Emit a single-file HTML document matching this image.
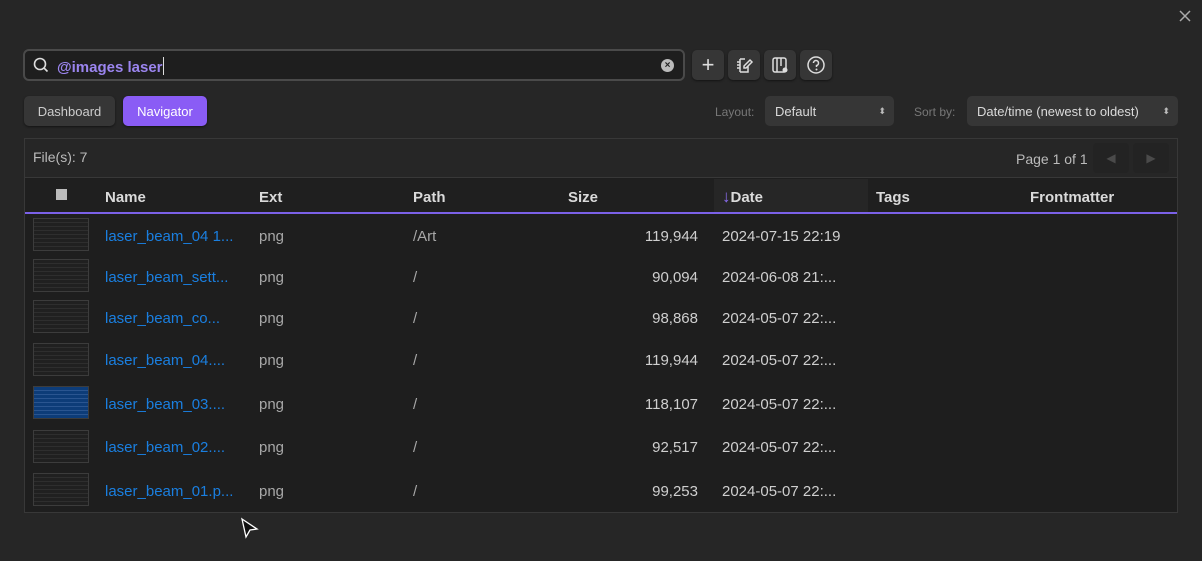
<!DOCTYPE html>
<html><head><style>
*{box-sizing:border-box;margin:0;padding:0}
body{width:1202px;height:561px;background:#262626;font-family:"Liberation Sans",sans-serif;color:#dadada;position:relative;overflow:hidden;font-size:14px}
.abs{position:absolute}
.btn{position:absolute;background:#363636;border-radius:5px;box-shadow:0 1px 2px rgba(0,0,0,.5)}
.sel{position:absolute;background:#363636;border-radius:5px;color:#dadada;font-size:13px;line-height:30px;padding-left:10px}
.lbl{position:absolute;color:#777;font-size:12px}
table{border-collapse:collapse;position:absolute;left:25px;top:179px;width:1152px;table-layout:fixed}
th{height:34px;background:#1f1f1f;text-align:left;font-weight:bold;font-size:15px;color:#dadada;padding-left:8px;padding-top:3px;border-bottom:2px solid #7b61e8}
td{font-size:15px;color:#a8a8a8;padding-left:8px;padding-top:3px;white-space:nowrap;overflow:hidden}
td.n{color:#1a7fe0}
td.r{text-align:right;padding-right:16px;color:#cfcfcf}
td.d{color:#cfcfcf}
.th{width:56px;height:33px;margin-top:-3px;background:#202020;border:1px solid #3c3c3c;background-image:repeating-linear-gradient(#202020 0 3px,#2e2e2e 3px 4px)}
</style></head><body>
<svg class="abs" style="left:1179px;top:10px" width="12" height="12"><path d="M1 1l10 10M11 1L1 11" stroke="#aaa" stroke-width="1.5"/></svg>
<div class="abs" style="left:23px;top:49px;width:662px;height:32px;background:#1e1e1e;border:2px solid #4a4a4a;border-radius:6px"></div>
<svg class="abs" style="left:33px;top:57px" width="16" height="16" viewBox="0 0 16 16"><circle cx="7" cy="7" r="5.5" fill="none" stroke="#ddd" stroke-width="1.6"/><path d="M11 11l3.5 3.5" stroke="#ddd" stroke-width="1.6"/></svg>
<div class="abs" style="left:57px;top:57px;color:#9b85ef;font-weight:bold;font-size:15px">@images laser<span style="display:inline-block;width:1px;height:18px;background:#ddd;vertical-align:-3px"></span></div>
<div class="abs" style="left:661px;top:59px;width:13px;height:13px;border-radius:50%;background:#bbb;color:#222;font-size:10px;line-height:13px;text-align:center;font-weight:bold">×</div>
<div class="btn" style="left:692px;top:50px;width:32px;height:30px;color:#ddd;font-size:22px;text-align:center;line-height:29px">+</div>
<div class="btn" style="left:728px;top:50px;width:32px;height:30px"><svg width="32" height="30"><path d="M12 9h5M12 22h8v-6M12 9v13M9 12h3M9 15h3M9 18h3M16 16l6-6 2 2-6 6h-2z" stroke="#ddd" stroke-width="1.5" fill="none"/></svg></div>
<div class="btn" style="left:764px;top:50px;width:32px;height:30px"><svg width="32" height="30"><rect x="9" y="8" width="13" height="14" rx="2" stroke="#ddd" stroke-width="1.5" fill="none"/><path d="M13 8v14M17 8v8" stroke="#ddd" stroke-width="1.5"/><circle cx="21" cy="20" r="2.5" fill="#ddd"/></svg></div>
<div class="btn" style="left:800px;top:50px;width:32px;height:30px"><svg width="32" height="30"><circle cx="16" cy="15" r="8" stroke="#ddd" stroke-width="1.5" fill="none"/><path d="M13.5 13a2.5 2.5 0 1 1 3 2.5v1.5" stroke="#ddd" stroke-width="1.5" fill="none"/><circle cx="16.5" cy="19.5" r="1" fill="#ddd"/></svg></div>
<div class="btn" style="left:24px;top:96px;width:91px;height:30px;font-size:13px;line-height:31px;text-align:center;color:#ccc">Dashboard</div>
<div class="btn" style="left:123px;top:96px;width:84px;height:30px;background:#8a5cf5;font-size:13px;line-height:31px;text-align:center;color:#fff">Navigator</div>
<div class="lbl" style="left:715px;top:105px">Layout:</div>
<div class="sel" style="left:765px;top:96px;width:129px;height:30px;line-height:31px">Default<span style="position:absolute;right:8px;font-size:9px;color:#bbb">⬍</span></div>
<div class="lbl" style="left:914px;top:105px">Sort by:</div>
<div class="sel" style="left:967px;top:96px;width:211px;height:30px;line-height:31px">Date/time (newest to oldest)<span style="position:absolute;right:8px;font-size:9px;color:#bbb">⬍</span></div>
<div class="abs" style="left:24px;top:138px;width:1154px;height:375px;background:#1e1e1e;border:1px solid #383838"></div>
<div class="abs" style="left:25px;top:139px;width:1152px;height:39px;background:#262626;border-bottom:1px solid #383838"></div>
<div class="abs" style="left:33px;top:149px;font-size:14px;color:#bbb">File(s): 7</div>
<div class="abs" style="left:1016px;top:151px;font-size:14px;color:#bbb">Page 1 of 1</div>
<div class="abs" style="left:1093px;top:143px;width:36px;height:30px;background:#232323;border-radius:4px;color:#4a4a4a;text-align:center;line-height:30px;font-size:12px">◀</div>
<div class="abs" style="left:1133px;top:143px;width:36px;height:30px;background:#232323;border-radius:4px;color:#4a4a4a;text-align:center;line-height:30px;font-size:12px">▶</div>
<table>
<colgroup><col style="width:72px"><col style="width:154px"><col style="width:154px"><col style="width:155px"><col style="width:154px"><col style="width:154px"><col style="width:154px"><col style="width:155px"></colgroup>
<tr><th style="text-align:center;padding:0"><span style="display:inline-block;width:11px;height:11px;background:#bbb"></span></th><th>Name</th><th>Ext</th><th>Path</th><th>Size</th><th style="background:#262626"><span style="color:#8a6cf0;font-size:17px">↓</span>Date</th><th>Tags</th><th>Frontmatter</th></tr>
<tr style="height:42px"><td><div class="th"></div></td><td class="n">laser_beam_04 1...</td><td>png</td><td>/Art</td><td class="r">119,944</td><td class="d">2024-07-15 22:19</td><td></td><td></td></tr>
<tr style="height:41px"><td><div class="th"></div></td><td class="n">laser_beam_sett...</td><td>png</td><td>/</td><td class="r">90,094</td><td class="d">2024-06-08 21:...</td><td></td><td></td></tr>
<tr style="height:41px"><td><div class="th"></div></td><td class="n">laser_beam_co...</td><td>png</td><td>/</td><td class="r">98,868</td><td class="d">2024-05-07 22:...</td><td></td><td></td></tr>
<tr style="height:44px"><td><div class="th"></div></td><td class="n">laser_beam_04....</td><td>png</td><td>/</td><td class="r">119,944</td><td class="d">2024-05-07 22:...</td><td></td><td></td></tr>
<tr style="height:43px"><td><div class="th" style="background:#0d3c78;background-image:repeating-linear-gradient(#0d3c78 0 3px,#2a5590 3px 4px)"></div></td><td class="n">laser_beam_03....</td><td>png</td><td>/</td><td class="r">118,107</td><td class="d">2024-05-07 22:...</td><td></td><td></td></tr>
<tr style="height:44px"><td><div class="th"></div></td><td class="n">laser_beam_02....</td><td>png</td><td>/</td><td class="r">92,517</td><td class="d">2024-05-07 22:...</td><td></td><td></td></tr>
<tr style="height:43px"><td><div class="th"></div></td><td class="n">laser_beam_01.p...</td><td>png</td><td>/</td><td class="r">99,253</td><td class="d">2024-05-07 22:...</td><td></td><td></td></tr>
</table>
<svg class="abs" style="left:240px;top:517px" width="20" height="22"><path d="M2 2l15 10-7 1-4 7z" fill="#111" stroke="#fff" stroke-width="1.3"/></svg>
</body></html>
